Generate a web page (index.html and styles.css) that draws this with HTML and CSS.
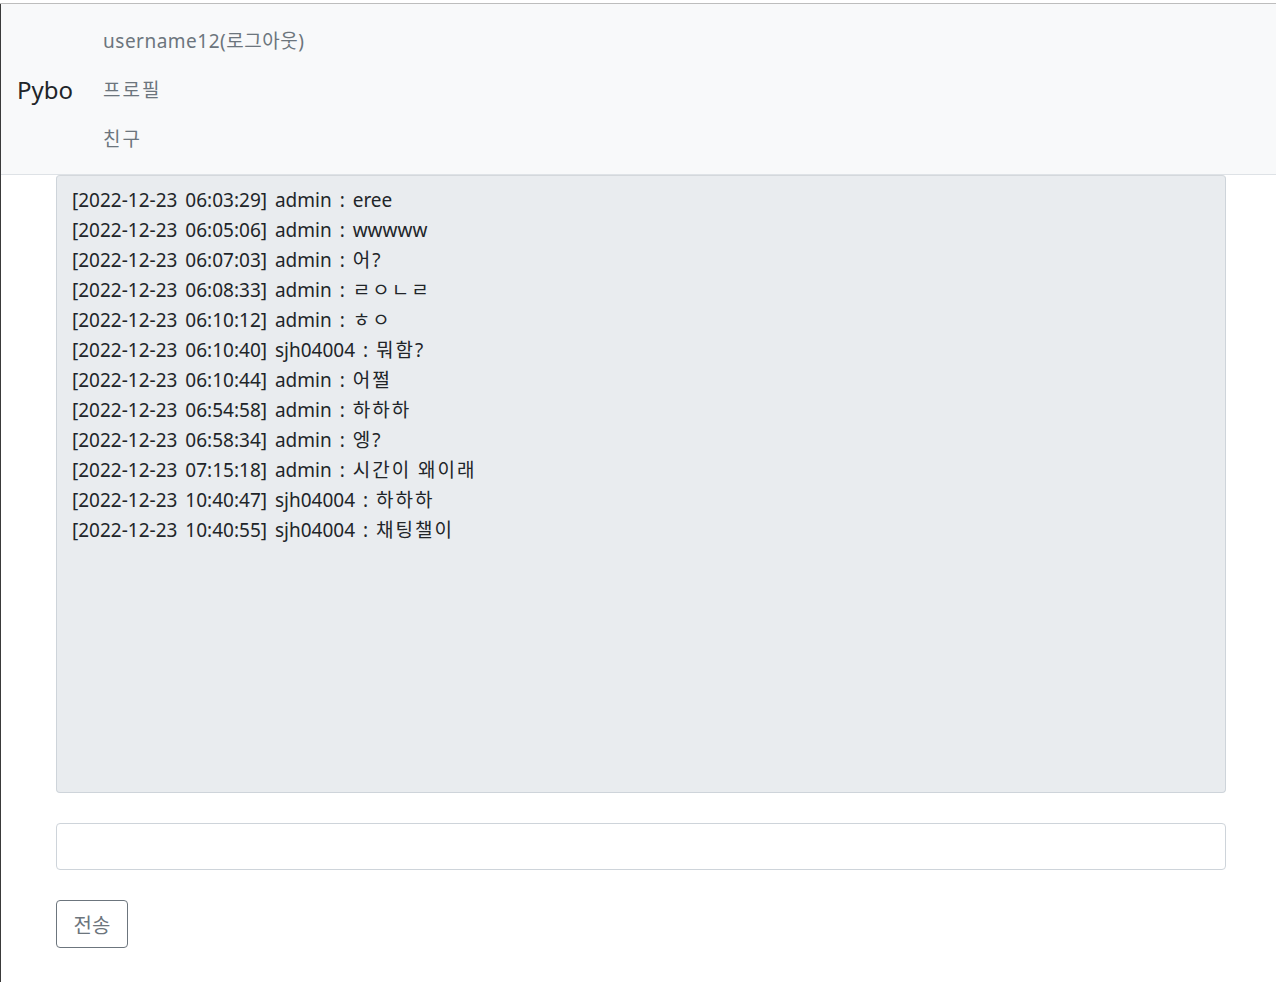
FILE: index.html
```html
<!DOCTYPE html>
<html lang="ko">
<head>
    <meta charset="UTF-8">
    <meta name="viewport" content="width=device-width, initial-scale=1.0">
    <title>Pybo</title>
    <link rel="stylesheet" href="styles.css">
</head>
<body>
    <nav class="navbar">
        <a class="navbar-brand" href="#">Pybo</a>
        <ul class="nav-list">
            <li><a class="nav-link" href="#">username12(로그아웃)</a></li>
            <li><a class="nav-link ko" href="#">프로필</a></li>
            <li><a class="nav-link ko" href="#">친구</a></li>
        </ul>
    </nav>

    <div class="container">
        <div class="chat-log">
            <div class="msg">[2022-12-23 06:03:29] admin : <span>eree</span></div>
            <div class="msg">[2022-12-23 06:05:06] admin : <span>wwwww</span></div>
            <div class="msg">[2022-12-23 06:07:03] admin : <span class="ko">어?</span></div>
            <div class="msg">[2022-12-23 06:08:33] admin : <span class="ko">ㄹㅇㄴㄹ</span></div>
            <div class="msg">[2022-12-23 06:10:12] admin : <span class="ko">ㅎㅇ</span></div>
            <div class="msg">[2022-12-23 06:10:40] sjh04004 : <span class="ko">뭐함?</span></div>
            <div class="msg">[2022-12-23 06:10:44] admin : <span class="ko">어쩔</span></div>
            <div class="msg">[2022-12-23 06:54:58] admin : <span class="ko">하하하</span></div>
            <div class="msg">[2022-12-23 06:58:34] admin : <span class="ko">엥?</span></div>
            <div class="msg">[2022-12-23 07:15:18] admin : <span class="ko">시간이 왜이래</span></div>
            <div class="msg">[2022-12-23 10:40:47] sjh04004 : <span class="ko">하하하</span></div>
            <div class="msg">[2022-12-23 10:40:55] sjh04004 : <span class="ko">채팅챌이</span></div>
        </div>
        <input type="text" class="chat-input">
        <button class="btn-send">전송</button>
    </div>
</body>
</html>
```

FILE: styles.css
```css
html {
    margin-top: 3px;
    border-top: 1px solid #bdbdbd;
    background: #ffffff;
}
body {
    margin: 0;
    border-left: 1px solid #3a3a3a;
    min-height: 978px;
    box-sizing: border-box;
    font-family: "Noto Sans", "Noto Sans CJK KR", sans-serif;
    color: #212529;
}
.navbar {
    display: flex;
    align-items: center;
    height: 171px;
    padding: 0 16px;
    background: #f8f9fa;
    border-bottom: 1px solid #dee2e6;
    box-sizing: border-box;
}
.navbar-brand {
    font-size: 24px;
    color: #212529;
    text-decoration: none;
    margin-right: 30px;
    margin-top: 1px;
}
.nav-list {
    list-style: none;
    margin: 0;
    padding: 2px 0 0;
    display: flex;
    flex-direction: column;
}
.nav-link {
    display: block;
    height: 49px;
    line-height: 49px;
    font-size: 19px;
    letter-spacing: 0.5px;
    color: #6c757d;
    text-decoration: none;
}
.nav-link.ko {
    letter-spacing: 2px;
}
.container {
    width: 1170px;
    margin-left: 55px;
}
.chat-log {
    height: 618px;
    box-sizing: border-box;
    background: #e9ecef;
    border: 1px solid #ced4da;
    border-top-color: #d4d8dc;
    border-radius: 4px;
    padding: 9px 15px;
}
.msg {
    height: 30px;
    line-height: 30px;
    font-size: 19px;
    word-spacing: 3px;
}
.msg .ko {
    letter-spacing: 2px;
    word-spacing: 0;
}
.chat-input {
    display: block;
    width: 100%;
    height: 47px;
    box-sizing: border-box;
    margin-top: 30px;
    border: 1px solid #ced4da;
    border-radius: 4px;
    background: #ffffff;
}
.btn-send {
    margin-top: 30px;
    width: 72px;
    height: 48px;
    background: #ffffff;
    border: 1px solid #6c757d;
    border-radius: 4px;
    color: #6c757d;
    font-family: "Noto Sans CJK KR", sans-serif;
    font-size: 20px;
    padding: 0;
}
```
